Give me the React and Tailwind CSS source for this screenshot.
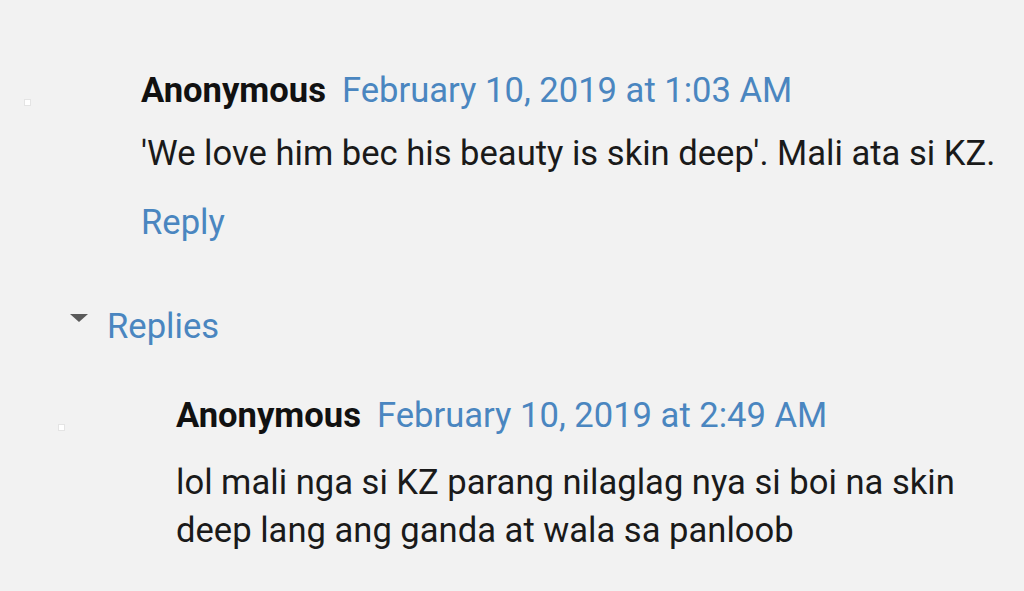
// Blogger-style comment thread with a nested reply.
const font = { fontFamily: "Roboto, 'Noto Sans', sans-serif" };

function Avatar() {
  return <div className="h-[7px] w-[7px] border border-[#e4e4e4] bg-white" />;
}

function Comment({ indent, date, children, showReply }) {
  return (
    <div className="flex">
      <div className={`shrink-0 pt-[33px] ${indent ? "w-[176px] pl-[58px]" : "w-[141px] pl-[24px]"}`}>
        <Avatar />
      </div>
      <div className="min-w-0 flex-1">
        <div className="flex items-baseline gap-[16px] leading-[48px]">
          <span className="text-[34.6px] font-bold text-[#111]">Anonymous</span>
          <span className="text-[34.6px] text-[#4a86c0]">{date}</span>
        </div>
        <p className={`${indent ? "mt-[19px]" : "mt-[15px]"} whitespace-nowrap text-[34.6px] leading-[48px] text-[#1a1a1a]`}>
          {children}
        </p>
        {showReply && (
          <div className="mt-[21px] text-[34.6px] leading-[48px] text-[#4a86c0]">Reply</div>
        )}
      </div>
    </div>
  );
}

export default function App() {
  return (
    <div className="h-[591px] w-[1024px] overflow-hidden bg-[#f2f2f2] pt-[66px]" style={font}>
      <Comment date="February 10, 2019 at 1:03 AM" showReply>
        'We love him bec his beauty is skin deep'. Mali ata si KZ.
      </Comment>

      <div className="mt-[56px] flex items-center pl-[70px] leading-[48px]">
        <svg width="18" height="8" viewBox="0 0 18 8" className="mr-[19px] -mt-[16px]">
          <path d="M0 0 H18 L9 8 Z" fill="#5a5a5a" />
        </svg>
        <span className="text-[34.6px] text-[#4a86c0]">Replies</span>
      </div>

      <div className="mt-[41px]">
        <Comment indent date="February 10, 2019 at 2:49 AM">
          lol mali nga si KZ parang nilaglag nya si boi na skin
          <br />
          deep lang ang ganda at wala sa panloob
        </Comment>
      </div>
    </div>
  );
}
